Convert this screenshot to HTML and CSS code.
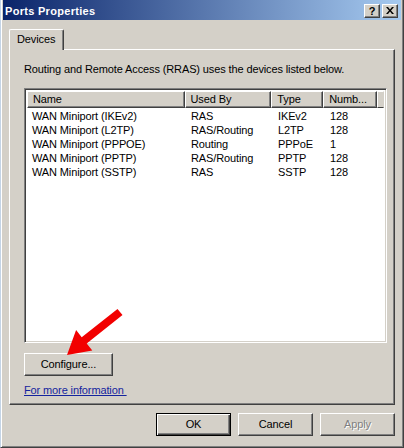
FILE: index.html
```html
<!DOCTYPE html>
<html>
<head>
<meta charset="utf-8">
<link rel="stylesheet" href="styles.css">
</head>
<body>
<div class="window">
  <div class="titlebar">
    <span class="title">Ports Properties</span>
    <div class="tbtns">
      <span class="tbtn q">?</span>
      <span class="tbtn x">
        <svg width="8" height="7" viewBox="0 0 8 7"><path d="M0 0h2l2 2.5L6 0h2L5 3.5 8 7H6L4 4.5 2 7H0l3-3.5z" fill="#000"/></svg>
      </span>
    </div>
  </div>
  <div class="body">
    <div class="tabs"><div class="tab">Devices</div></div>
    <div class="panel">
      <p class="intro">Routing and Remote Access (RRAS) uses the devices listed below.</p>
      <div class="list">
        <div class="hdr">
          <div class="hc c1">Name</div>
          <div class="hc c2">Used By</div>
          <div class="hc c3">Type</div>
          <div class="hc c4">Numb...</div>
          <div class="hc c5"></div>
        </div>
        <div class="row"><span class="c1">WAN Miniport (IKEv2)</span><span class="c2">RAS</span><span class="c3">IKEv2</span><span class="c4">128</span></div>
        <div class="row"><span class="c1">WAN Miniport (L2TP)</span><span class="c2">RAS/Routing</span><span class="c3">L2TP</span><span class="c4">128</span></div>
        <div class="row"><span class="c1">WAN Miniport (PPPOE)</span><span class="c2">Routing</span><span class="c3">PPPoE</span><span class="c4">1</span></div>
        <div class="row"><span class="c1">WAN Miniport (PPTP)</span><span class="c2">RAS/Routing</span><span class="c3">PPTP</span><span class="c4">128</span></div>
        <div class="row"><span class="c1">WAN Miniport (SSTP)</span><span class="c2">RAS</span><span class="c3">SSTP</span><span class="c4">128</span></div>
      </div>
      <div class="btn configure">Configure...</div>
      <a class="link" href="#">For more information&nbsp;</a>
    </div>
    <div class="actions">
      <div class="btn dflt">OK</div>
      <div class="btn">Cancel</div>
      <div class="btn disabled">Apply</div>
    </div>
  </div>
  <svg class="arrow" width="404" height="448" viewBox="0 0 404 448">
    <polygon points="117.5,308.9 81.7,337.2 76.1,330.1 67,355 92.3,350.5 86.7,343.4 122.5,315.1" fill="#f20000"/>
  </svg>
</div>
</body>
</html>
```

FILE: styles.css
```css
* { box-sizing: border-box; }
html, body { margin: 0; padding: 0; }
body {
  background: #d4d0c8;
  font-family: "Liberation Sans", Arial, sans-serif;
  font-size: 11px;
  letter-spacing: -0.12px;
  color: #000;
}
.window {
  position: relative;
  width: 404px;
  height: 448px;
  background: #d4d0c8;
  border-style: solid;
  border-width: 0 1px 1px 1px;
  border-color: #404040 #404040 #404040 #c4d4e6;
  box-shadow: inset 1px 0 #ffffff, inset -1px -1px #808080;
  padding: 0 2px 2px 2px;
}
.titlebar {
  height: 20px;
  background: linear-gradient(to right, #0a246a 0%, #a6caf0 100%);
  display: flex;
  align-items: center;
  justify-content: space-between;
  padding-left: 2px;
}
.title {
  color: #fff;
  font-weight: bold;
  font-size: 11px;
  letter-spacing: 0.3px;
  margin-top: 2px;
}
.tbtns {
  display: flex;
  gap: 2px;
  margin-right: 3px;
  margin-top: 2px;
}
.tbtn {
  width: 16px;
  height: 14px;
  background: #d4d0c8;
  border-style: solid;
  border-width: 1px;
  border-color: #ffffff #404040 #404040 #ffffff;
  box-shadow: inset -1px -1px #808080;
  display: flex;
  align-items: center;
  justify-content: center;
  font-weight: bold;
  font-size: 11px;
  line-height: 1;
  letter-spacing: 0;
}
.tbtn.x svg { display: block; margin-top: -1px; }
.body {
  padding: 9px 0 0 6px;
}
.tabs {
  display: flex;
  height: 20px;
  position: relative;
  z-index: 1;
}
.tab {
  width: 55px;
  height: 21px;
  background: #d4d0c8;
  border-style: solid;
  border-width: 1px 1px 0 1px;
  border-color: #ffffff #404040 #d4d0c8 #ffffff;
  border-radius: 2px 2px 0 0;
  box-shadow: inset -1px 0 #808080;
  padding: 3px 0 0 7px;
}
.panel {
  width: 386px;
  height: 356px;
  border-style: solid;
  border-width: 1px;
  border-color: #ffffff #404040 #404040 #ffffff;
  box-shadow: inset -1px -1px #808080;
  padding: 13px 0 0 14px;
  display: flex;
  flex-direction: column;
  align-items: flex-start;
}
.intro {
  margin: 0;
  line-height: 13px;
  height: 13px;
}
.list {
  margin-top: 12px;
  width: 363px;
  height: 255px;
  background: #fff;
  border-style: solid;
  border-width: 1px;
  border-color: #808080 #ffffff #ffffff #808080;
  box-shadow: inset 1px 1px #404040, inset -1px -1px #d4d0c8;
  padding: 2px 2px;
}
.hdr {
  display: flex;
  height: 17px;
  margin-bottom: 1px;
}
.hc {
  height: 17px;
  background: #d4d0c8;
  border-style: solid;
  border-width: 1px;
  border-color: #ffffff #404040 #404040 #ffffff;
  box-shadow: inset -1px -1px #808080;
  padding: 1px 0 0 5px;
  line-height: 13px;
  white-space: nowrap;
  overflow: hidden;
}
.hc.c5 { flex: 1; border-right-color: #d4d0c8; box-shadow: none; }
.c1 { width: 158px; }
.c2 { width: 87px; }
.c3 { width: 52px; }
.c4 { width: 54px; }
.row {
  display: flex;
  height: 14px;
  line-height: 14px;
}
.row span {
  padding-left: 6px;
  white-space: nowrap;
}
.row .c1 { padding-left: 5px; }
.btn {
  width: 75px;
  height: 23px;
  background: #d4d0c8;
  border-style: solid;
  border-width: 1px;
  border-color: #ffffff #404040 #404040 #ffffff;
  box-shadow: inset -1px -1px #808080;
  display: flex;
  align-items: center;
  justify-content: center;
  padding-bottom: 1px;
}
.configure {
  width: 89px;
  margin-top: 10px;
}
.link {
  margin-top: 8px;
  color: #14249e;
  text-decoration: underline;
  line-height: 13px;
}
.actions {
  display: flex;
  gap: 7px;
  justify-content: flex-end;
  width: 386px;
  margin-top: 8px;
}
.btn.dflt {
  border-color: #000;
  box-shadow: inset 1px 1px #fff, inset -1px -1px #404040, inset -2px -2px #808080;
}
.btn.disabled {
  color: #808080;
  text-shadow: 1px 1px #fff;
}
.arrow {
  position: absolute;
  left: -1px;
  top: 0;
  pointer-events: none;
}
```
